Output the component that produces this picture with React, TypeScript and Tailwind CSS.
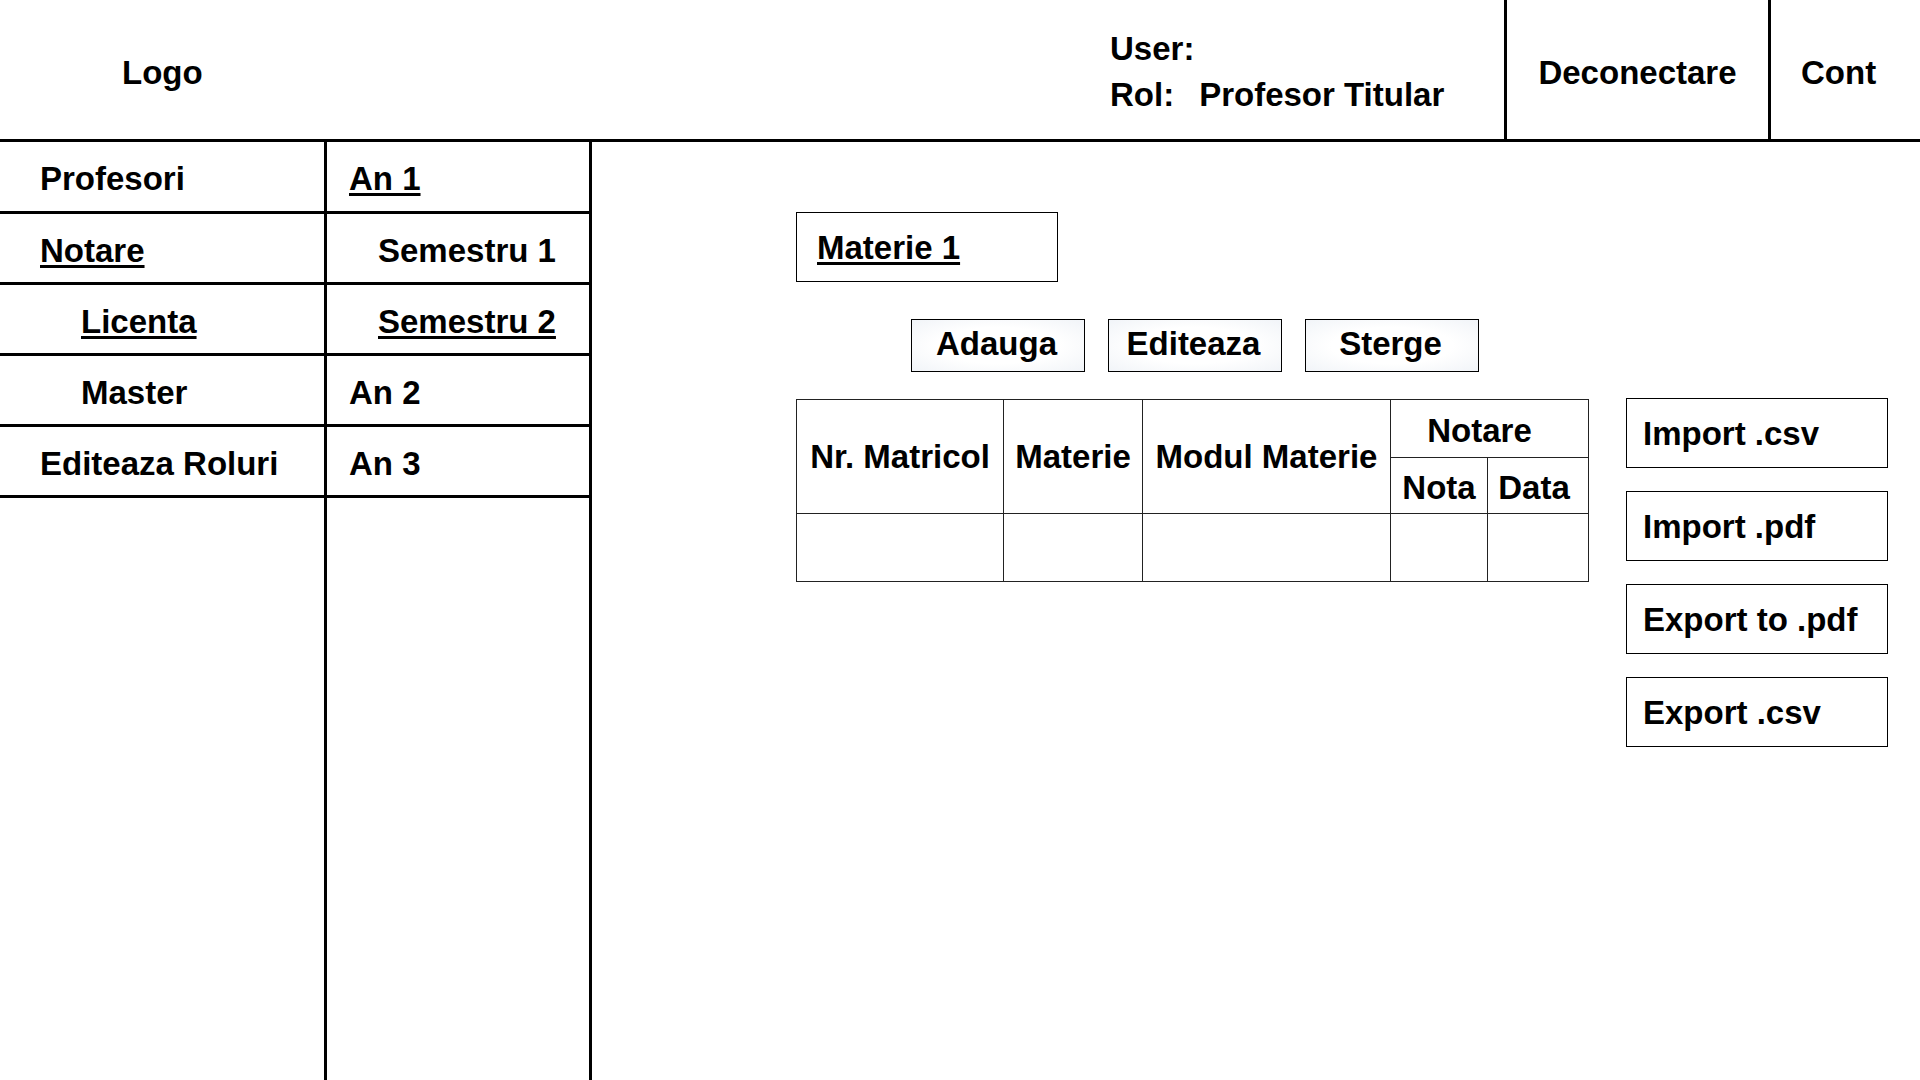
import { ReactNode } from 'react';


interface NavRow {
    left: string;
    leftIndent: boolean;
    leftLink: boolean;
    right: string;
    rightIndent: boolean;
    rightLink: boolean;
}

const NAV_ROWS: NavRow[] = [
    { left: 'Profesori', leftIndent: false, leftLink: false, right: 'An 1', rightIndent: false, rightLink: true },
    { left: 'Notare', leftIndent: false, leftLink: true, right: 'Semestru 1', rightIndent: true, rightLink: false },
    { left: 'Licenta', leftIndent: true, leftLink: true, right: 'Semestru 2', rightIndent: true, rightLink: true },
    { left: 'Master', leftIndent: true, leftLink: false, right: 'An 2', rightIndent: false, rightLink: false },
    { left: 'Editeaza Roluri', leftIndent: false, leftLink: false, right: 'An 3', rightIndent: false, rightLink: false },
];

const ACTIONS = ['Adauga', 'Editeaza', 'Sterge'];
const FILE_ACTIONS = ['Import .csv', 'Import .pdf', 'Export to .pdf', 'Export .csv'];

const LINK = 'underline decoration-[3px] underline-offset-[3px]';


function Link({ on, children }: { on: boolean; children: ReactNode }) {
    return <span className={on ? LINK : ''}>{children}</span>;
}

export default function App() {
    return (
        <div className="h-screen w-full flex flex-col overflow-hidden bg-white text-black font-bold text-[33px] leading-none font-['Liberation_Sans',Arial,sans-serif]">
            {/* Header */}
            <header className="h-[142px] shrink-0 flex border-b-[3px] border-black">
                <div className="flex-1 flex items-center pl-[122px] pt-[6px]">Logo</div>

                <div className="w-[394px] flex flex-col justify-center leading-[46px] pt-[4px]">
                    <div>User:</div>
                    <div>
                        Rol:<span className="ml-[25px]">Profesor Titular</span>
                    </div>
                </div>

                <div className="w-[264px] border-l-[3px] border-black flex items-center justify-center pt-[6px]">
                    Deconectare
                </div>
                <div className="w-[152px] border-l-[3px] border-black flex items-center pl-[30px] pt-[6px]">
                    Cont
                </div>
            </header>

            <div className="flex-1 flex">
                {/* Sidebar, first column */}
                <nav className="w-[327px] shrink-0 border-r-[3px] border-black flex flex-col">
                    {NAV_ROWS.map((row, i) => (
                        <div
                            key={row.left}
                            className={`${i === 0 ? 'h-[72px]' : 'h-[71px]'} border-b-[3px] border-black flex items-center pt-[4px] ${
                                row.leftIndent ? 'pl-[81px]' : 'pl-[40px]'
                            }`}
                        >
                            <Link on={row.leftLink}>{row.left}</Link>
                        </div>
                    ))}
                </nav>

                {/* Sidebar, second column */}
                <nav className="w-[265px] shrink-0 border-r-[3px] border-black flex flex-col">
                    {NAV_ROWS.map((row, i) => (
                        <div
                            key={row.right}
                            className={`${i === 0 ? 'h-[72px]' : 'h-[71px]'} border-b-[3px] border-black flex items-center pt-[4px] ${
                                row.rightIndent ? 'pl-[51px]' : 'pl-[22px]'
                            }`}
                        >
                            <Link on={row.rightLink}>{row.right}</Link>
                        </div>
                    ))}
                </nav>

                {/* Content */}
                <main className="flex-1 flex pl-[204px] pt-[70px]">
                    <div className="flex flex-col">
                        <div className="w-[262px] h-[70px] border border-black flex items-center pl-[20px]">
                            <span className={LINK}>Materie 1</span>
                        </div>

                        <div className="mt-[37px] pl-[115px] flex gap-[23px]">
                            {ACTIONS.map((label) => (
                                <button
                                    key={label}
                                    className="w-[174px] h-[53px] border border-black flex items-center justify-center pb-[4px] pr-[3px] bg-[radial-gradient(ellipse_at_center,#ffffff_50%,#f1f4f8_100%)]"
                                >
                                    {label}
                                </button>
                            ))}
                        </div>

                        <table className="mt-[27px] w-[792px] table-fixed border-collapse">
                            <colgroup>
                                <col className="w-[207px]" />
                                <col className="w-[139px]" />
                                <col className="w-[248px]" />
                                <col className="w-[97px]" />
                                <col className="w-[101px]" />
                            </colgroup>
                            <thead>
                                <tr className="h-[58px]">
                                    <th rowSpan={2} className="border border-[#222] p-0 font-bold">
                                        Nr. Matricol
                                    </th>
                                    <th rowSpan={2} className="border border-[#222] p-0 font-bold">
                                        Materie
                                    </th>
                                    <th rowSpan={2} className="border border-[#222] p-0 font-bold">
                                        Modul Materie
                                    </th>
                                    <th colSpan={2} className="border border-[#222] p-0 pr-[20px] pt-[4px] font-bold">
                                        Notare
                                    </th>
                                </tr>
                                <tr className="h-[56px]">
                                    <th className="border border-[#222] p-0 pt-[4px] font-bold">Nota</th>
                                    <th className="border border-[#222] p-0 pt-[4px] pr-[8px] font-bold">Data</th>
                                </tr>
                            </thead>
                            <tbody>
                                <tr className="h-[68px]">
                                    <td className="border border-[#222]"></td>
                                    <td className="border border-[#222]"></td>
                                    <td className="border border-[#222]"></td>
                                    <td className="border border-[#222]"></td>
                                    <td className="border border-[#222]"></td>
                                </tr>
                            </tbody>
                        </table>
                    </div>

                    {/* Import / export */}
                    <div className="ml-[37px] pt-[186px] flex flex-col gap-[23px]">
                        {FILE_ACTIONS.map((label) => (
                            <button
                                key={label}
                                className="w-[262px] h-[70px] border border-black flex items-center pl-[16px] text-left"
                            >
                                {label}
                            </button>
                        ))}
                    </div>
                </main>
            </div>
        </div>
    );
}
